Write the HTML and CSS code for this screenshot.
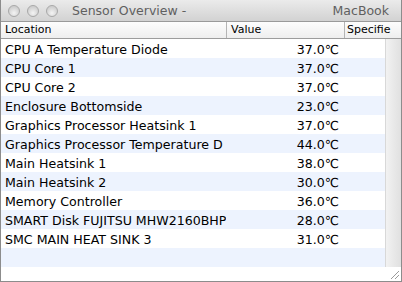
FILE: index.html
```html
<!DOCTYPE html>
<html lang="en">
<head>
    <meta charset="UTF-8">
    <title>Sensor Overview - MacBook</title>
    <link rel="stylesheet" href="styles.css">
</head>
<body>
    <div class="window">
        <div class="titlebar">
            <div class="lights">
                <span class="light"></span>
                <span class="light"></span>
                <span class="light"></span>
            </div>
            <span class="title">Sensor Overview -</span>
            <span class="host">MacBook</span>
        </div>
        <div class="row head">
            <div class="cell name">Location</div>
            <div class="cell value">Value</div>
            <div class="cell spec">Specifie</div>
        </div>
        <div class="content">
            <div class="table">
                <div class="row"><div class="cell name">CPU A Temperature Diode</div><div class="cell value num">37.0℃</div><div class="cell spec"></div></div>
                <div class="row"><div class="cell name">CPU Core 1</div><div class="cell value num">37.0℃</div><div class="cell spec"></div></div>
                <div class="row"><div class="cell name">CPU Core 2</div><div class="cell value num">37.0℃</div><div class="cell spec"></div></div>
                <div class="row"><div class="cell name">Enclosure Bottomside</div><div class="cell value num">23.0℃</div><div class="cell spec"></div></div>
                <div class="row"><div class="cell name">Graphics Processor Heatsink 1</div><div class="cell value num">37.0℃</div><div class="cell spec"></div></div>
                <div class="row"><div class="cell name">Graphics Processor Temperature D</div><div class="cell value num">44.0℃</div><div class="cell spec"></div></div>
                <div class="row"><div class="cell name">Main Heatsink 1</div><div class="cell value num">38.0℃</div><div class="cell spec"></div></div>
                <div class="row"><div class="cell name">Main Heatsink 2</div><div class="cell value num">30.0℃</div><div class="cell spec"></div></div>
                <div class="row"><div class="cell name">Memory Controller</div><div class="cell value num">36.0℃</div><div class="cell spec"></div></div>
                <div class="row"><div class="cell name">SMART Disk FUJITSU MHW2160BHP</div><div class="cell value num">28.0℃</div><div class="cell spec"></div></div>
                <div class="row"><div class="cell name">SMC MAIN HEAT SINK 3</div><div class="cell value num">31.0℃</div><div class="cell spec"></div></div>
                <div class="row empty"></div>
            </div>
            <div class="scroller"></div>
        </div>
        <div class="footer">
            <svg class="grip" width="12" height="12" viewBox="0 0 12 12">
                <path d="M11 3 L3 11 M11 7 L7 11" stroke="#9a9a9a" stroke-width="1"/>
            </svg>
        </div>
    </div>
</body>
</html>
```

FILE: styles.css
```css
body {
    margin: 0;
    font-family: "DejaVu Sans", "Liberation Sans", sans-serif;
    background: #fff;
}
.window {
    width: 402px;
    height: 282px;
    box-sizing: border-box;
    border-left: 1px solid #8c8c8c;
    border-right: 1px solid #8c8c8c;
    border-bottom: 1px solid #8c8c8c;
    display: flex;
    flex-direction: column;
    overflow: hidden;
}
.titlebar {
    height: 22px;
    box-sizing: border-box;
    background: linear-gradient(#ebebeb, #d2d2d2);
    border-bottom: 1px solid #9a9a9a;
    display: flex;
    align-items: center;
    padding: 0 12px 0 7px;
}
.lights {
    display: flex;
    gap: 7px;
}
.light {
    width: 12px;
    height: 12px;
    border-radius: 50%;
    box-sizing: border-box;
    border: 1px solid #a8a8a8;
    background: radial-gradient(circle at 50% 70%, #f4f4f4, #cfcfcf 70%);
}
.title {
    margin-left: 14px;
    font-size: 12.5px;
    color: #606060;
}
.host {
    margin-left: auto;
    font-size: 12.5px;
    color: #606060;
}
.content {
    display: flex;
}
.table {
    width: 385px;
}
.row {
    display: grid;
    grid-template-columns: 225px 118px 1fr;
    height: 19px;
    font-size: 12.6px;
    color: #000;
    align-items: center;
}
.table .row:nth-child(even) {
    background: #edf3fe;
}
.row.head {
    flex: none;
    height: 16px;
    background: linear-gradient(#fdfdfd, #eeeeee);
    border-bottom: 1px solid #9c9c9c;
    font-size: 11px;
}
.cell {
    padding: 1px 4px 0;
    white-space: nowrap;
    overflow: hidden;
}
.head .cell {
    height: 16px;
    line-height: 16px;
    padding-top: 0;
}
.head .value,
.head .spec {
    border-left: 1px solid #b4b4b4;
}
.head .spec {
    padding: 0 0 0 2px;
}
.num {
    text-align: right;
    padding-right: 5px;
}
.scroller {
    width: 15px;
    border-left: 1px solid #d8d8d8;
    background: linear-gradient(90deg, #f2f2f2, #e0e0e0);
}
.footer {
    flex: 1;
    display: flex;
    justify-content: flex-end;
    align-items: flex-end;
}
.grip {
    margin: 0 1px 1px 0;
}
```
